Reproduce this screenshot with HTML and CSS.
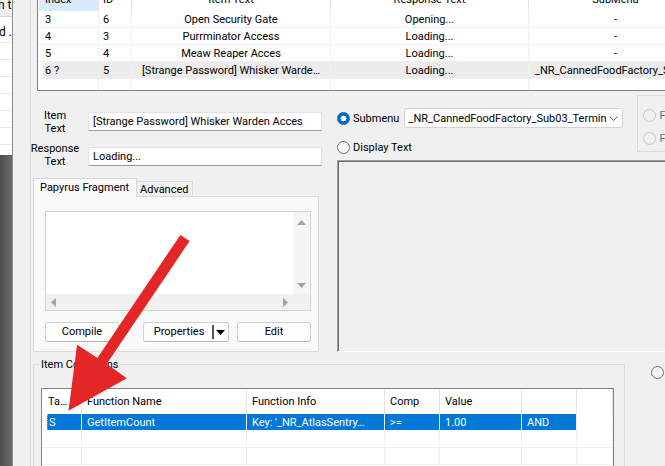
FILE: index.html
```html
<!DOCTYPE html>
<html lang="en">
<head>
	<meta charset="UTF-8">
	<meta name="viewport" content="width=device-width, initial-scale=1.0">
	<title>Terminal Menu Item</title>
	<link rel="stylesheet" href="styles.css">
</head>
<body>
<div class="screen">

	<div class="behind">
		<div class="behind-list">
			<div class="behind-head">n th</div>
			<div class="behind-row">d ...</div>
			<div class="behind-row"></div>
			<div class="behind-row"></div>
			<div class="behind-row"></div>
			<div class="behind-row"></div>
			<div class="behind-row"></div>
			<div class="behind-row"></div>
		</div>
		<div class="behind-dark"></div>
	</div>
	<div class="gutter"></div>

	<div class="dialog">

		<div class="items">
			<div class="lv-row lv-head">
				<span class="cell hot">Index</span>
				<span class="cell id">ID</span>
				<span class="cell mid">Item Text</span>
				<span class="cell mid">Response Text</span>
				<span class="cell mid">SubMenu</span>
			</div>
			<div class="lv-row">
				<span class="cell first">3</span>
				<span class="cell id">6</span>
				<span class="cell mid">Open Security Gate</span>
				<span class="cell mid">Opening...</span>
				<span class="cell mid">-</span>
			</div>
			<div class="lv-row">
				<span class="cell first">4</span>
				<span class="cell id">3</span>
				<span class="cell mid">Purrminator Access</span>
				<span class="cell mid">Loading...</span>
				<span class="cell mid">-</span>
			</div>
			<div class="lv-row">
				<span class="cell first">5</span>
				<span class="cell id">4</span>
				<span class="cell mid">Meaw Reaper Acces</span>
				<span class="cell mid">Loading...</span>
				<span class="cell mid">-</span>
			</div>
			<div class="lv-row picked">
				<span class="cell first">6 ?</span>
				<span class="cell id">5</span>
				<span class="cell mid">[Strange Password] Whisker Warde…</span>
				<span class="cell mid">Loading...</span>
				<span class="cell mid">_NR_CannedFoodFactory_Sub03_Terminal</span>
			</div>
			<div class="lv-row">
				<span class="cell first"></span>
				<span class="cell id"></span>
				<span class="cell mid"></span>
				<span class="cell mid"></span>
				<span class="cell mid"></span>
			</div>
		</div>

		<div class="middle">
			<div class="form">
				<div class="field">
					<div class="field-label"><span>Item</span><span>Text</span></div>
					<div class="edit">[Strange Password] Whisker Warden Acces</div>
				</div>
				<div class="field second">
					<div class="field-label"><span>Response</span><span>Text</span></div>
					<div class="edit lower">Loading...</div>
				</div>

				<div class="tabs">
					<div class="tab active">Papyrus Fragment</div>
					<div class="tab">Advanced</div>
				</div>
				<div class="tab-panel">
					<div class="script-box">
						<div class="script-text"></div>
						<div class="vscroll">
							<svg width="9" height="5" viewBox="0 0 9 5"><path d="M0 5 L4.5 0 L9 5 Z" fill="#a3a3a3"/></svg>
							<svg width="9" height="5" viewBox="0 0 9 5"><path d="M0 0 L4.5 5 L9 0 Z" fill="#a3a3a3"/></svg>
						</div>
						<div class="hscroll">
							<svg width="5" height="9" viewBox="0 0 5 9"><path d="M5 0 L0 4.5 L5 9 Z" fill="#a3a3a3"/></svg>
							<svg width="5" height="9" viewBox="0 0 5 9"><path d="M0 0 L5 4.5 L0 9 Z" fill="#a3a3a3"/></svg>
						</div>
						<div class="corner"></div>
					</div>
					<div class="buttons">
						<button class="btn compile">Compile</button>
						<button class="btn split">
							<span class="split-label">Properties</span>
							<span class="split-bar"></span>
							<svg width="9" height="5" viewBox="0 0 9 5"><path d="M0 0 L9 0 L4.5 5 Z" fill="#000"/></svg>
						</button>
						<button class="btn edit-btn">Edit</button>
					</div>
				</div>
			</div>

			<div class="side">
				<div class="side-top">
					<div class="choice">
						<div class="choice-row">
							<span class="radio on"></span>
							<span class="radio-label">Submenu</span>
							<div class="combo">
								<span>_NR_CannedFoodFactory_Sub03_Termin</span>
								<svg width="9" height="5" viewBox="0 0 9 5"><path d="M0.5 0.5 L4.5 4.5 L8.5 0.5" fill="none" stroke="#606060" stroke-width="1"/></svg>
							</div>
						</div>
						<div class="choice-row small">
							<span class="radio"></span>
							<span class="radio-label">Display Text</span>
						</div>
					</div>
					<div class="clip-group">
						<div class="choice-row small">
							<span class="radio off"></span>
							<span class="radio-label grey">F</span>
						</div>
						<div class="choice-row small next">
							<span class="radio off"></span>
							<span class="radio-label grey">F</span>
						</div>
					</div>
				</div>
				<div class="display-box"></div>
			</div>
		</div>

		<div class="cond-row">
			<div class="group">
				<span class="group-title">Item Conditions</span>
				<div class="cond-list">
					<div class="cl-row cl-head">
						<span class="cell">Ta…</span>
						<span class="cell">Function Name</span>
						<span class="cell">Function Info</span>
						<span class="cell">Comp</span>
						<span class="cell">Value</span>
						<span class="cell"></span>
						<span class="cell"></span>
					</div>
					<div class="cl-row sel">
						<span class="cell first">S</span>
						<span class="cell">GetItemCount</span>
						<span class="cell">Key: '_NR_AtlasSentry…</span>
						<span class="cell">&gt;=</span>
						<span class="cell">1.00</span>
						<span class="cell last">AND</span>
						<span class="cell"></span>
					</div>
					<div class="cl-row">
						<span class="cell"></span><span class="cell"></span><span class="cell"></span><span class="cell"></span><span class="cell"></span><span class="cell"></span><span class="cell"></span>
					</div>
					<div class="cl-row">
						<span class="cell"></span><span class="cell"></span><span class="cell"></span><span class="cell"></span><span class="cell"></span><span class="cell"></span><span class="cell"></span>
					</div>
				</div>
			</div>
			<span class="radio cond-radio"></span>
		</div>

	</div>

	<svg class="arrow" width="665" height="466" viewBox="0 0 665 466">
		<polygon points="180.4,234.9 189.6,241.1 106.6,364.1 126.9,378.3 68.5,410.7 77.1,344.7 97.4,357.9" fill="#e42626"/>
	</svg>
</div>
</body>
</html>
```

FILE: styles.css
```css
:root {
	--dialog-bg:		#f0f0f0;
	--list-border:		#828282;
	--grid-line:		#f0f0f0;
	--head-line:		#e5e5e5;
	--frame-line:		#dcdcdc;
	--select-bg:		#0078d7;
	--accent:		#0067c0;
}

* {
	padding:		0;
	margin:			0;
	box-sizing:		border-box;
}

body {
	background-color:	var(--dialog-bg);
	font-family:		Roboto, "Liberation Sans", sans-serif;
	font-size:		11px;
	color:			#000;
}

.screen {
	position:		relative;
	width:			665px;
	height:			466px;
	overflow:		hidden;
	display:		flex;
}

/* window behind the dialog */
.behind {
	width:			13px;
	flex:			none;
	display:		flex;
	flex-direction:		column;
	border-right:		1px solid #8c8c8c;
}

.behind-list {
	height:			155px;
	background:		#fff;
	overflow:		hidden;
	white-space:		nowrap;
}

.behind-head {
	height:			17px;
	line-height:		10px;
	background:		#f0f0f0;
	border-bottom:		1px solid #d5d5d5;
	margin-left:		-2px;
	font-size:		12px;
}

.behind-row {
	height:			17px;
	line-height:		16px;
	border-bottom:		1px solid #e8e8e8;
	margin-left:		-1px;
	font-size:		12px;
}

.behind-row:nth-child(2) {
	height:			26px;
	line-height:		30px;
}

.behind-dark {
	flex:			1;
	background:		linear-gradient(to right, #4e4e4e, #6b6b6b);
}

.gutter {
	width:			18px;
	flex:			none;
	background:		var(--dialog-bg);
	border-right:		1px solid #d9d9d9;
}

.dialog {
	flex:			1;
	min-width:		0;
	display:		flex;
	flex-direction:		column;
}

/* item list */
.items {
	width:			700px;
	height:			103px;
	flex:			none;
	margin:			-12px 0 0 6px;
	border:			1px solid var(--list-border);
	background:		#fff;
	overflow:		hidden;
}

.lv-row {
	display:		grid;
	grid-template-columns:	61px 33px 199px 198px 174px;
	height:			17px;
	line-height:		17px;
}

.cell {
	display:		block;
	padding:		0 6px;
	white-space:		nowrap;
	overflow:		hidden;
	text-overflow:		ellipsis;
	border-right:		1px solid var(--grid-line);
	border-bottom:		1px solid var(--grid-line);
}

.lv-row .first {
	padding-left:		7px;
}

.lv-row .id {
	padding-left:		4px;
}

.lv-row .mid {
	text-align:		center;
}

.lv-head {
	height:			22px;
	line-height:		21px;
}

.lv-head .cell {
	border-bottom:		none;
	border-right-color:	var(--head-line);
}

.lv-head .hot {
	padding-left:		6px;
	background:		#d9ebf9;
	background-clip:	padding-box;
	border-left:		1px solid #fff;
}

.lv-row.picked .cell {
	background:		#ececec;
}

.lv-row.picked .first {
	background:		linear-gradient(to right, #fff 5px, #ececec 5px);
}

/* middle part */
.middle {
	display:		flex;
	flex:			none;
	margin-top:		4px;
}

.form {
	width:			291px;
	flex:			none;
	padding-top:		15px;
}

.field {
	display:		flex;
	align-items:		flex-start;
}

.field.second {
	margin-top:		8px;
}

.field-label {
	width:			48px;
	display:		flex;
	flex-direction:		column;
	align-items:		center;
	line-height:		12.5px;
	white-space:		nowrap;
}

.edit {
	width:			234px;
	height:			19px;
	margin:			2px 0 0 9px;
	padding-left:		4px;
	line-height:		17px;
	background:		#fff;
	border:			1px solid #e3e3e3;
	border-bottom-color:	#9a9a9a;
	white-space:		nowrap;
	overflow:		hidden;
}

.edit.lower {
	margin-top:		4px;
}

.tabs {
	display:		flex;
	align-items:		flex-end;
	margin:			10px 0 0 2px;
	position:		relative;
	z-index:		1;
	white-space:		nowrap;
}

.tab {
	height:			15px;
	width:			56px;
	padding-left:		3px;
	line-height:		15px;
	border:			1px solid #d9d9d9;
	border-left:		none;
	border-bottom:		none;
	background:		var(--dialog-bg);
}

.tab.active {
	width:			104px;
	height:			19px;
	padding-left:		6px;
	line-height:		17px;
	border-left:		1px solid #d9d9d9;
	background:		#f9f9f9;
	margin-bottom:		-1px;
}

.tab-panel {
	width:			286px;
	height:			156px;
	margin-left:		2px;
	padding:		14px 0 0 11px;
	border:			1px solid #d9d9d9;
	background:		#f9f9f9;
}

.script-box {
	width:			266px;
	height:			100px;
	border:			1px solid #d3d3d3;
	display:		grid;
	grid-template-columns:	1fr 17px;
	grid-template-rows:	1fr 16px;
	background:		#fff;
}

.vscroll {
	background:		#f5f5f5;
	display:		flex;
	flex-direction:		column;
	justify-content:	space-between;
	align-items:		center;
	padding:		8px 0 6px;
}

.hscroll {
	background:		var(--dialog-bg);
	display:		flex;
	justify-content:	space-between;
	align-items:		center;
	padding:		0 5px 0 5px;
}

.corner {
	background:		var(--dialog-bg);
}

.buttons {
	display:		flex;
	margin-top:		11px;
}

.btn {
	height:			20px;
	font:			inherit;
	color:			#000;
	background:		#fdfdfd;
	border:			1px solid #d0d0d0;
	border-bottom-color:	#b8b8b8;
	border-radius:		3px;
	line-height:		18px;
}

.compile {
	width:			74px;
}

.split {
	width:			86px;
	margin-left:		24px;
	display:		flex;
	align-items:		center;
	padding-right:		3px;
}

.split-label {
	flex:			1;
	text-align:		center;
	padding-left:		2px;
}

.split-bar {
	width:			2px;
	height:			14px;
	background:		#555;
	margin-right:		2px;
}

.edit-btn {
	width:			74px;
	margin-left:		8px;
}

/* right side */
.side {
	width:			360px;
	flex:			none;
	margin-left:		15px;
}

.side-top {
	display:		flex;
}

.choice {
	width:			289px;
	padding-top:		13px;
}

.choice-row {
	display:		flex;
	align-items:		center;
	height:			20px;
}

.choice-row.small {
	height:			14px;
	margin-top:		12px;
}

.radio {
	display:		inline-block;
	width:			13px;
	height:			13px;
	flex:			none;
	border-radius:		50%;
	border:			1px solid #6f6f6f;
	background:		#f7f7f7;
}

.radio.on {
	border-color:		var(--accent);
	background:		radial-gradient(circle, #fff 0 2.6px, var(--accent) 3.2px);
}

.radio.off {
	border-color:		#c6c6c6;
	background:		#f0f0f0;
}

.radio-label {
	margin-left:		3px;
	white-space:		nowrap;
}

.radio-label.grey {
	color:			#6d6d6d;
}

.combo {
	margin-left:		auto;
	width:			219px;
	height:			20px;
	padding:		0 4px 0 3px;
	display:		flex;
	align-items:		center;
	justify-content:	space-between;
	background:		#fff;
	border:			1px solid #d3d3d3;
	border-radius:		3px;
	white-space:		nowrap;
}

.clip-group {
	width:			60px;
	height:			57px;
	margin-left:		14px;
	padding:		0 0 0 5px;
	border:			1px solid var(--frame-line);
}

.clip-group .choice-row.small {
	margin-top:		12px;
}

.clip-group .choice-row.next {
	margin-top:		9px;
}

.display-box {
	height:			192px;
	margin-top:		6px;
	border:			1px solid;
	border-color:		#a0a0a0 #fff #fff #a0a0a0;
	box-shadow:		inset 1px 1px 0 #6a6a6a;
}

/* conditions */
.cond-row {
	display:		flex;
	margin-top:		12px;
	flex:			1;
}

.group {
	width:			592px;
	margin-left:		2px;
	border:			1px solid var(--frame-line);
	border-bottom:		none;
	display:		flex;
	flex-direction:		column;
	align-items:		flex-start;
}

.group-title {
	margin:			-7px 0 0 6px;
	padding:		0 1px;
	line-height:		14px;
	background:		var(--dialog-bg);
}

.cond-list {
	width:			573px;
	flex:			1;
	margin:			16px 0 0 7px;
	border:			1px solid var(--list-border);
	border-bottom:		none;
	background:		#fff;
}

.cl-row {
	display:		grid;
	grid-template-columns:	40px 165px 138px 55px 82px 55px 36px;
	height:			17px;
	line-height:		17px;
}

.cl-row .cell {
	padding:		0 4px 0 5px;
}

.cl-row .cell:first-child {
	padding-left:		6px;
}

.cl-head {
	height:			25px;
	line-height:		26px;
}

.cl-head .cell {
	border-bottom:		none;
	border-right-color:	var(--head-line);
}

.cl-row.sel .cell {
	color:			#fff;
	background:		var(--select-bg);
	border-bottom-color:	#fff;
}

.cl-row.sel .cell:last-child {
	background:		#fff;
}

.cl-row.sel .first {
	padding-left:		7px;
	background:		linear-gradient(to right, #fff 5px, var(--select-bg) 5px);
	position:		relative;
}

.cl-row.sel .first::before,
.cl-row.sel .last::after {
	content:		"";
	position:		absolute;
	top:			0;
	bottom:			0;
	border-left:		1px dotted #f0a030;
}

.cl-row.sel .first::before {
	left:			5px;
}

.cl-row.sel .last {
	position:		relative;
}

.cl-row.sel .last::after {
	right:			-1px;
}

.cond-radio {
	margin:			2px 0 0 26px;
}

.arrow {
	position:		absolute;
	left:			0;
	top:			0;
	pointer-events:		none;
}
```
